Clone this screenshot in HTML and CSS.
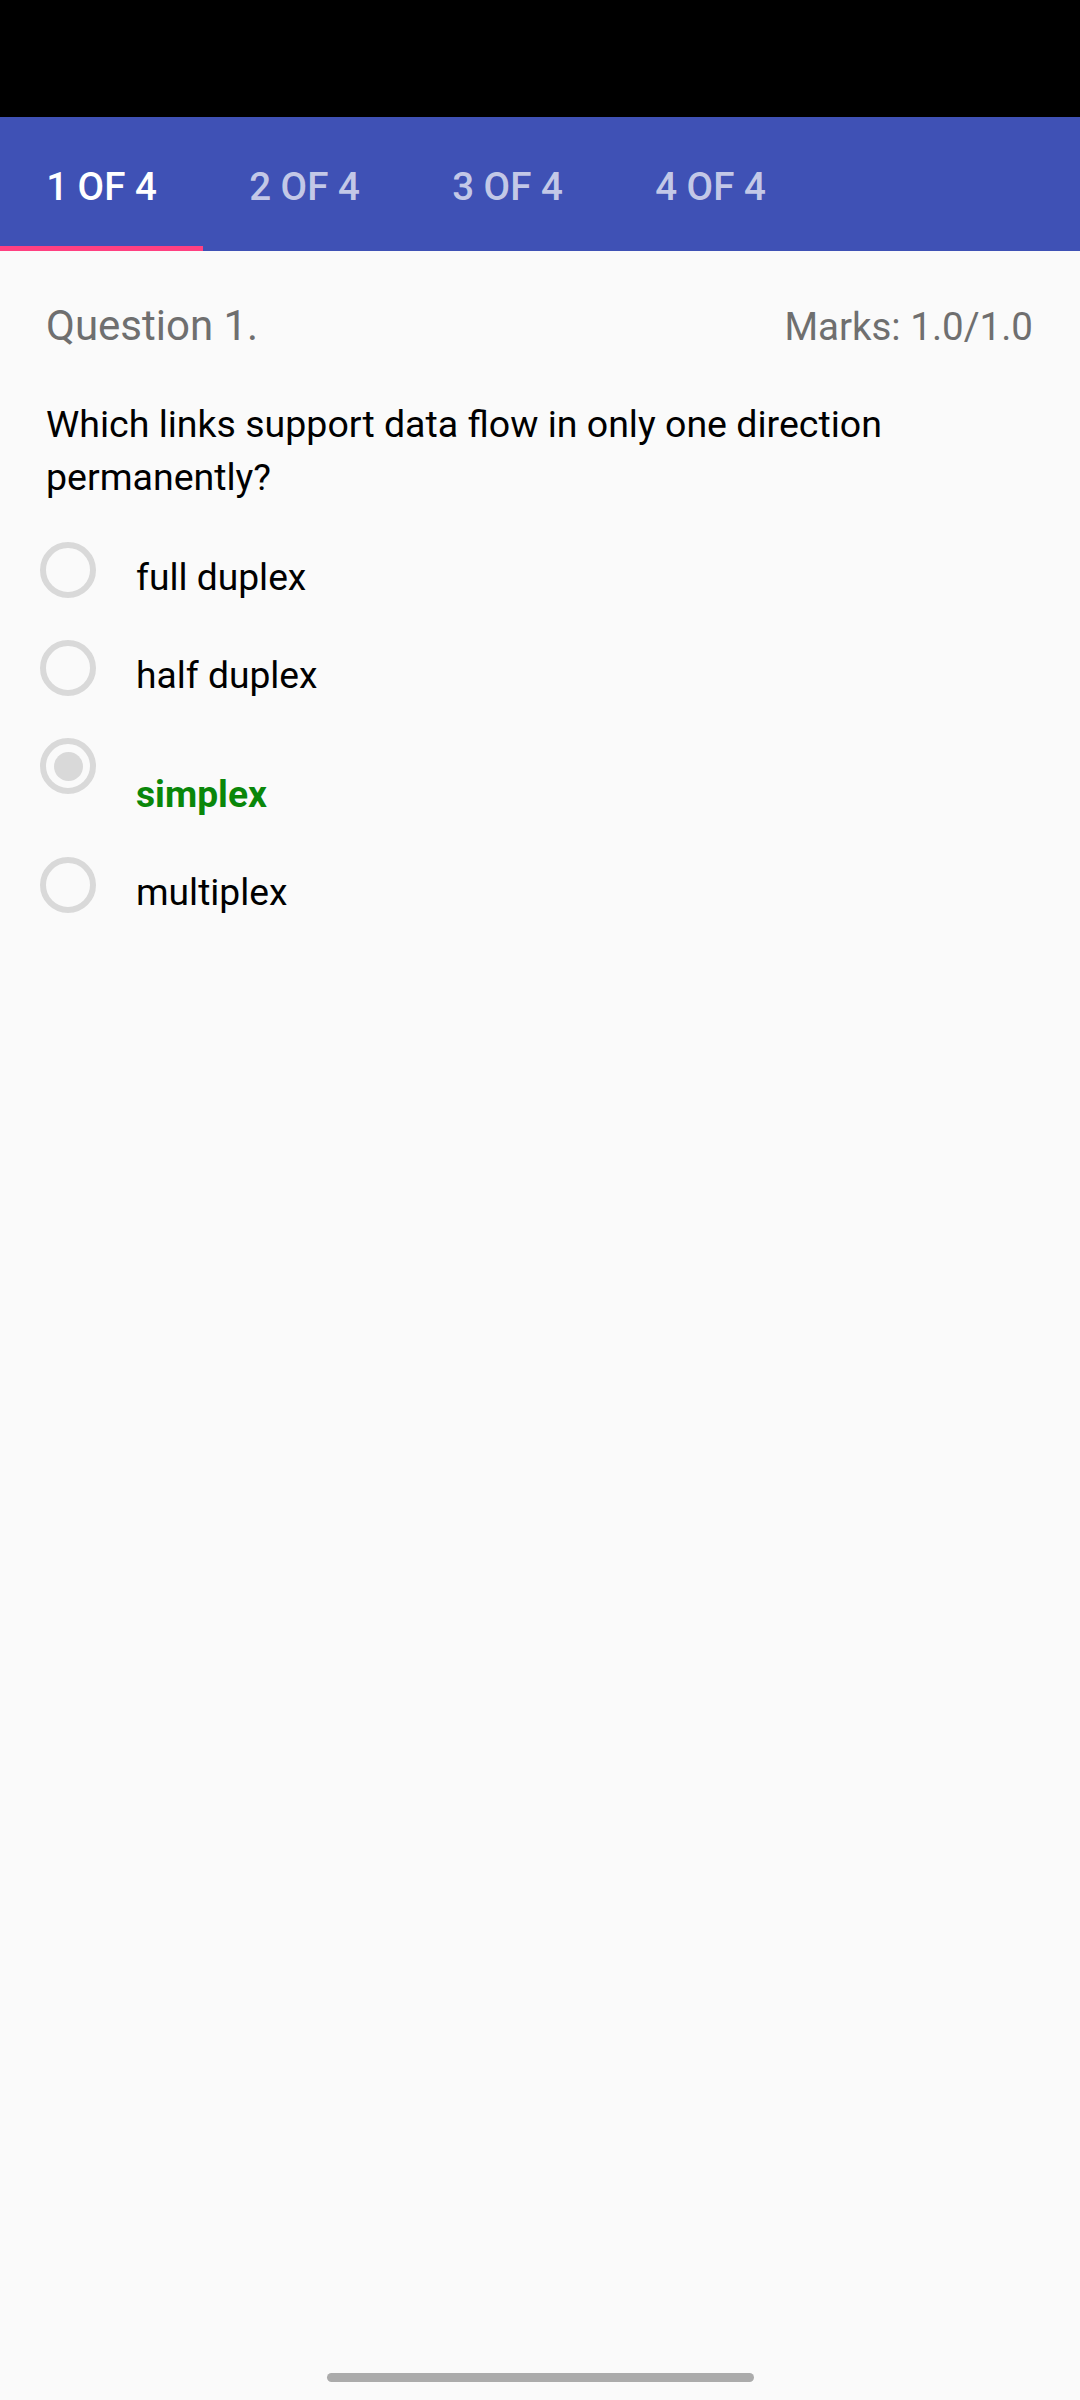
FILE: index.html
```html
<!DOCTYPE html>
<html lang="en">
<head>
<meta charset="utf-8">
<title>Quiz</title>
<link rel="stylesheet" href="styles.css">
</head>
<body>
<div class="screen">
  <div class="status-bar"></div>
  <nav class="tabs">
    <div class="tab active">1 OF 4</div>
    <div class="tab">2 OF 4</div>
    <div class="tab">3 OF 4</div>
    <div class="tab">4 OF 4</div>
  </nav>
  <main class="content">
    <div class="q-header">
      <span class="q-title">Question 1.</span>
      <span class="q-marks">Marks: 1.0/1.0</span>
    </div>
    <p class="q-text">Which links support data flow in only one direction permanently?</p>
    <div class="options">
      <div class="opt">
        <span class="radio"></span>
        <span class="opt-label">full duplex</span>
      </div>
      <div class="opt">
        <span class="radio"></span>
        <span class="opt-label">half duplex</span>
      </div>
      <div class="opt">
        <span class="radio checked"></span>
        <span class="opt-label correct">simplex</span>
      </div>
      <div class="opt">
        <span class="radio"></span>
        <span class="opt-label">multiplex</span>
      </div>
    </div>
  </main>
  <div class="nav-bar"><span class="handle"></span></div>
</div>
</body>
</html>
```

FILE: styles.css
```css
html, body {
  margin: 0;
  padding: 0;
  background: #fafafa;
}
body {
  font-family: Roboto, "Noto Sans", sans-serif;
}
.screen {
  width: 1080px;
  height: 2400px;
  display: flex;
  flex-direction: column;
  background: #fafafa;
}
.status-bar {
  height: 117px;
  background: #000;
  flex: none;
}
.tabs {
  height: 134px;
  background: #3f51b5;
  display: flex;
  flex: none;
}
.tab {
  width: 203px;
  box-sizing: border-box;
  display: flex;
  align-items: center;
  justify-content: center;
  font-size: 38.5px;
  font-weight: 500;
  color: rgba(255, 255, 255, 0.7);
  border-bottom: 5px solid transparent;
  padding-top: 9px;
}
.tab.active {
  color: #fff;
  border-bottom-color: #ff4081;
}
.content {
  padding: 50px 47px 0 46px;
  flex: none;
}
.q-header {
  display: flex;
  justify-content: space-between;
  align-items: baseline;
  line-height: 50px;
}
.q-title {
  font-size: 42px;
  color: #6f6f6f;
}
.q-marks {
  font-size: 38.5px;
  color: #6f6f6f;
}
.q-text {
  margin: 46px 0 0 0;
  font-size: 37.5px;
  line-height: 53px;
  color: #000;
}
.options {
  margin-top: 38px;
  display: flex;
  flex-direction: column;
  gap: 40px;
}
.opt {
  display: flex;
  align-items: flex-start;
  margin-left: -6px;
}
.radio {
  width: 44px;
  height: 44px;
  border: 6px solid #d9d9d9;
  border-radius: 50%;
  flex: none;
  display: flex;
  align-items: center;
  justify-content: center;
}
.radio.checked::after {
  content: "";
  width: 29px;
  height: 29px;
  border-radius: 50%;
  background: #d9d9d9;
}
.opt-label {
  margin-left: 40px;
  padding-top: 13px;
  font-size: 37.2px;
  line-height: 45px;
  color: #000;
}
.opt-label.correct {
  padding-top: 34px;
  color: #0a870a;
  font-weight: 700;
}
.nav-bar {
  margin-top: auto;
  display: flex;
  justify-content: center;
  padding-bottom: 18px;
}
.handle {
  width: 427px;
  height: 9px;
  border-radius: 5px;
  background: #ababab;
}
```
